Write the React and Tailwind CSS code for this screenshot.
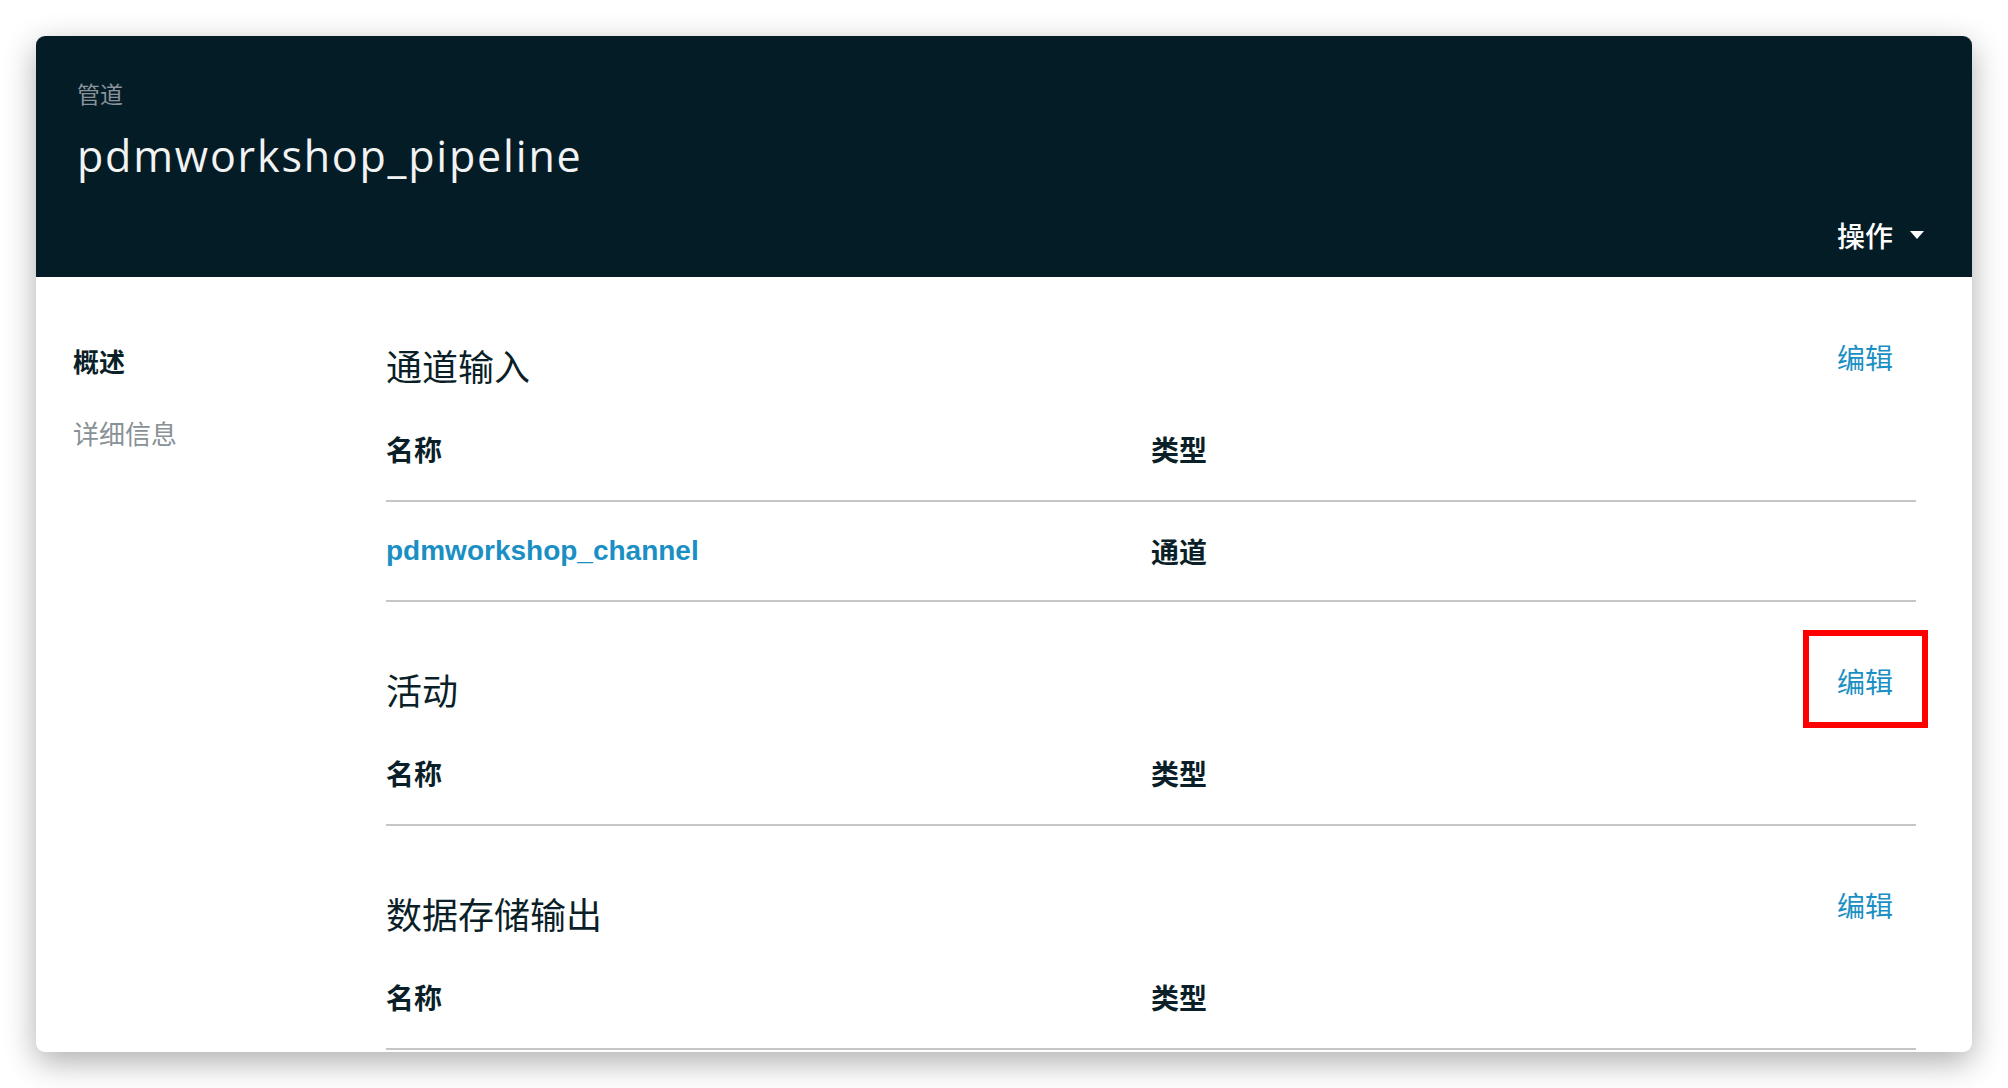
import React from 'react';

const CJK = "font-['Noto_Sans_CJK_SC',sans-serif]";

// 区块：标题行 + 表头 + 数据行
function Section({ title, rows = [], highlight = false }) {
  return (
    <section>
      <div className="flex h-[62px] items-center justify-between">
        <h2 className={`${CJK} text-[36px] leading-[44px] text-[#0b1f29]`}>{title}</h2>
        <div className="mb-[16px] pr-[23px]">
          <span className={`relative ${CJK} text-[28px] leading-[36px] text-[#1a8fc4]`}>
            编辑
            {highlight && (
              <span className="pointer-events-none absolute -left-[34px] -right-[35px] -top-[31px] -bottom-[27px] border-[6px] border-[#ff0000]" />
            )}
          </span>
        </div>
      </div>
      <div className="grid h-[106px] grid-cols-2 items-center border-b-2 border-[#c6c6c6] pt-[2px]">
        <div className={`${CJK} text-[28px] font-bold text-[#0b1f29]`}>名称</div>
        <div className={`${CJK} text-[28px] font-bold text-[#0b1f29]`}>类型</div>
      </div>
      {rows.map((r) => (
        <div key={r.name} className="grid h-[100px] grid-cols-2 items-center border-b-2 border-[#c6c6c6]">
          <div className="font-['Liberation_Sans',sans-serif] text-[28px] font-bold text-[#1a8fc4]">{r.name}</div>
          <div className={`${CJK} text-[28px] font-bold text-[#0b1f29]`}>{r.type}</div>
        </div>
      ))}
    </section>
  );
}

export default function App() {
  return (
    <div className="h-[1088px] w-[2008px] overflow-hidden bg-white px-[36px] pt-[36px]">
      <div className="flex h-[1016px] flex-col overflow-hidden rounded-[9px] bg-white shadow-[0_10px_32px_rgba(0,0,0,0.32)]">
        <header className="flex h-[241px] shrink-0 flex-col bg-[#041c26] pl-[41px] pr-[48px] pt-[42px] pb-[24px]">
          <div className={`${CJK} text-[23px] leading-[30px] text-[#8a9399]`}>管道</div>
          <h1 className="mt-[22px] font-['Open_Sans',sans-serif] text-[43px] leading-[52px] tracking-[1.8px] text-[#f2f3f3]">
            pdmworkshop_pipeline
          </h1>
          <div className="mt-auto flex justify-end">
            <button className={`flex items-center gap-[17px] ${CJK} text-[28px] leading-[36px] font-medium text-white`}>
              操作
              <svg width="14" height="8" viewBox="0 0 14 8">
                <path d="M0 0h14L7 8z" fill="#ffffff" />
              </svg>
            </button>
          </div>
        </header>

        <div className="flex flex-1">
          <nav className={`w-[350px] shrink-0 pl-[37px] pt-[64px] ${CJK} text-[26px] leading-[40px]`}>
            <div className="font-bold text-[#0b1f29]">概述</div>
            <div className="mt-[32px] text-[#879196]">详细信息</div>
          </nav>
          <main className="flex flex-1 flex-col gap-[56px] pr-[56px] pt-[57px]">
            <Section title="通道输入" rows={[{ name: 'pdmworkshop_channel', type: '通道' }]} />
            <Section title="活动" highlight />
            <Section title="数据存储输出" />
          </main>
        </div>
      </div>
    </div>
  );
}
